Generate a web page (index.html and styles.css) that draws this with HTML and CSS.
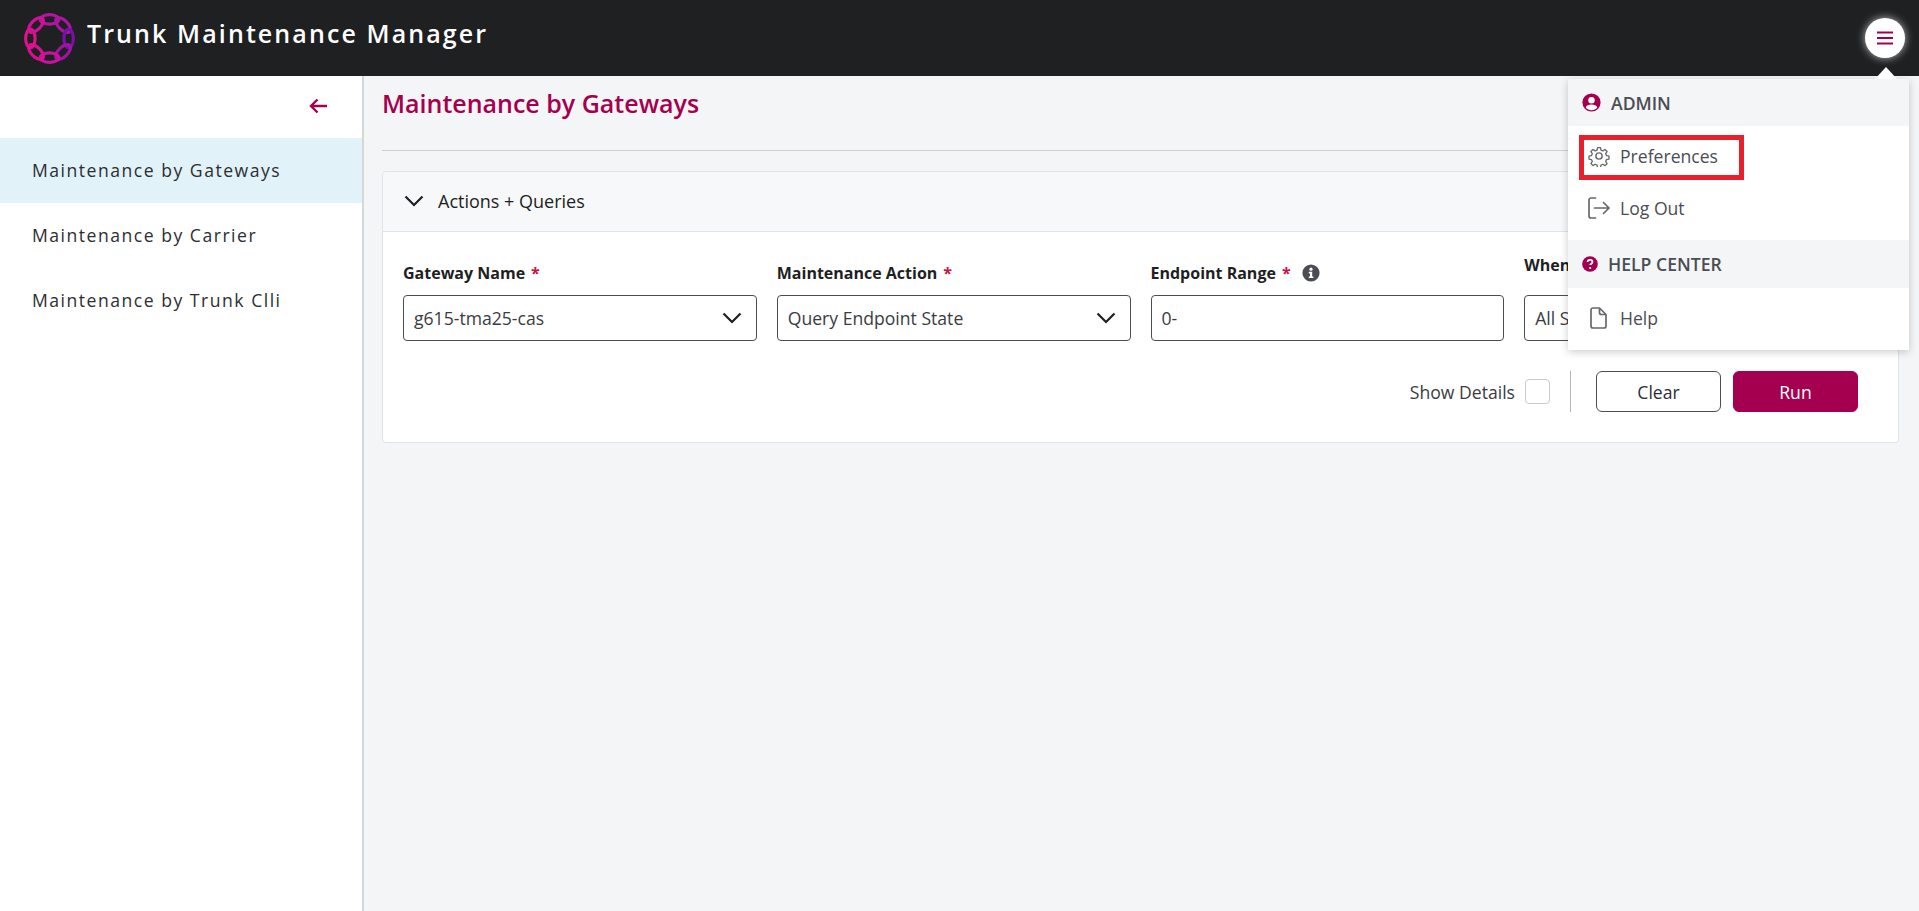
FILE: index.html
```html
<!DOCTYPE html>
<html lang="en">
<head>
    <meta charset="UTF-8">
    <meta name="viewport" content="width=device-width, initial-scale=1.0">
    <title>Trunk Maintenance Manager</title>
    <link rel="stylesheet" href="styles.css">
</head>
<body>
    <header class="topbar">
        <div class="brand">
            <svg class="brand-logo" viewBox="0 0 52 52" fill="none" stroke-width="3.2">
                <ellipse cx="26" cy="6.5" rx="9.5" ry="4.8" stroke="#b3159f"/>
                <ellipse cx="26" cy="6.5" rx="9.5" ry="4.8" stroke="#a8179f" transform="rotate(45 26 26)"/>
                <ellipse cx="26" cy="6.5" rx="9.5" ry="4.8" stroke="#7a10a8" transform="rotate(90 26 26)"/>
                <ellipse cx="26" cy="6.5" rx="9.5" ry="4.8" stroke="#a0159f" transform="rotate(135 26 26)"/>
                <ellipse cx="26" cy="6.5" rx="9.5" ry="4.8" stroke="#c9139b" transform="rotate(180 26 26)"/>
                <ellipse cx="26" cy="6.5" rx="9.5" ry="4.8" stroke="#d91093" transform="rotate(225 26 26)"/>
                <ellipse cx="26" cy="6.5" rx="9.5" ry="4.8" stroke="#e3108c" transform="rotate(270 26 26)"/>
                <ellipse cx="26" cy="6.5" rx="9.5" ry="4.8" stroke="#d01296" transform="rotate(315 26 26)"/>
            </svg>
            <span class="brand-name">Trunk Maintenance Manager</span>
        </div>
        <button class="menu-btn">
            <svg viewBox="0 0 16 14" width="16" height="14"><path d="M0 1.5h16M0 7h16M0 12.5h16" stroke="#a5004f" stroke-width="2.2"/></svg>
        </button>
    </header>

    <div class="layout">
        <nav class="sidebar">
            <div class="sidebar-top">
                <svg viewBox="0 0 18 16" width="18" height="16" fill="none" stroke="#a5004f" stroke-width="2.4"><path d="M8.5 1.5 2 8l6.5 6.5M2.5 8H18"/></svg>
            </div>
            <a class="nav-item active">Maintenance by Gateways</a>
            <a class="nav-item">Maintenance by Carrier</a>
            <a class="nav-item">Maintenance by Trunk Clli</a>
        </nav>

        <main class="content">
            <h1 class="page-title">Maintenance by Gateways</h1>

            <section class="card">
                <div class="card-head">
                    <svg viewBox="0 0 20 12" width="20" height="12" fill="none" stroke="#1e1f22" stroke-width="2.2"><path d="M1.5 1.5 10 10l8.500-8.500"/></svg>
                    <span>Actions + Queries</span>
                </div>
                <div class="card-body">
                    <div class="fields">
                        <div class="field">
                            <label>Gateway Name <em>*</em></label>
                            <div class="control">
                                <span>g615-tma25-cas</span>
                                <svg viewBox="0 0 20 12" width="20" height="12" fill="none" stroke="#1e1f22" stroke-width="2.2"><path d="M1.5 1.5 10 10l8.500-8.500"/></svg>
                            </div>
                        </div>
                        <div class="field">
                            <label>Maintenance Action <em>*</em></label>
                            <div class="control">
                                <span>Query Endpoint State</span>
                                <svg viewBox="0 0 20 12" width="20" height="12" fill="none" stroke="#1e1f22" stroke-width="2.2"><path d="M1.5 1.5 10 10l8.500-8.500"/></svg>
                            </div>
                        </div>
                        <div class="field">
                            <label>Endpoint Range <em>*</em>
                                <svg class="info-icon" viewBox="0 0 18 18" width="18" height="18"><circle cx="9" cy="9" r="8.600" fill="#4a4d52"/><circle cx="9" cy="5.200" r="1.600" fill="#fff"/><path d="M6.800 7.800h3.400v4.600h1.200v1.600H6.800v-1.600H8v-3H6.800z" fill="#fff"/></svg>
                            </label>
                            <div class="control">
                                <span>0-</span>
                            </div>
                        </div>
                        <div class="field">
                            <label class="label-raised">When</label>
                            <div class="control">
                                <span>All States</span>
                            </div>
                        </div>
                    </div>
                    <div class="actions">
                        <span class="check-label">Show Details</span>
                        <span class="checkbox"></span>
                        <span class="separator"></span>
                        <button class="btn">Clear</button>
                        <button class="btn primary">Run</button>
                    </div>
                </div>
            </section>
        </main>
    </div>

    <div class="dropdown">
        <div class="dropdown-head">
            <svg viewBox="0 0 20 20" width="19" height="19"><circle cx="10" cy="10" r="9.600" fill="#a5004f"/><circle cx="10" cy="7.600" r="3.400" fill="#fff"/><path d="M3.900 15.200c1-2.400 3-3.200 6.100-3.200s5.100.8 6.100 3.200c-1.500 1.800-3.600 2.900-6.100 2.900s-4.600-1.100-6.100-2.900z" fill="#fff"/></svg>
            <span>ADMIN</span>
        </div>
        <div class="dropdown-item item-prefs">
            <div class="highlight">
                <svg viewBox="0 0 24 24" width="22" height="22" fill="none" stroke="#66696e" stroke-width="1.6" stroke-linejoin="round"><circle cx="12" cy="12" r="3.400"/><path d="M10.200 1.800h3.600l.6 3 2.300 1 2.600-1.700 2.500 2.500-1.700 2.600 1 2.300 3 .6v3.600l-3 .6-1 2.300 1.700 2.600-2.500 2.500-2.600-1.700-2.300 1-.6 3h-3.600l-.6-3-2.300-1-2.600 1.700-2.500-2.500 1.700-2.600-1-2.300-3-.6v-3.600l3-.6 1-2.300-1.700-2.600 2.500-2.500 2.600 1.700 2.300-1z" transform="translate(1.200 1.200) scale(.9)"/></svg>
                <span>Preferences</span>
            </div>
        </div>
        <div class="dropdown-item item-logout">
            <svg viewBox="0 0 22 22" width="22" height="22" fill="none" stroke="#66696e" stroke-width="1.700" stroke-linecap="round" stroke-linejoin="round"><path d="M7.500 1H3a2 2 0 0 0-2 2v16a2 2 0 0 0 2 2h4.500M6.500 11H21M15.500 5.500 21 11l-5.500 5.500"/></svg>
            <span>Log Out</span>
        </div>
        <div class="dropdown-head help-head">
            <svg viewBox="0 0 20 20" width="16" height="16"><circle cx="10" cy="10" r="9.800" fill="#a5004f"/><path d="M7 7.600c0-1.800 1.400-2.800 3.100-2.800s3 1 3 2.600c0 2.200-2.800 2.200-2.800 4" fill="none" stroke="#fff" stroke-width="2.200"/><circle cx="10.200" cy="15" r="1.400" fill="#fff"/></svg>
            <span>HELP CENTER</span>
        </div>
        <div class="dropdown-item item-help">
            <svg viewBox="0 0 17 22" width="17" height="22" fill="none" stroke="#66696e" stroke-width="1.700" stroke-linejoin="round"><path d="M3 1h6.500L16 7.500V19a2 2 0 0 1-2 2H3a2 2 0 0 1-2-2V3a2 2 0 0 1 2-2zM9.500 1v4.500a2 2 0 0 0 2 2H16"/></svg>
            <span>Help</span>
        </div>
    </div>
</body>
</html>
```

FILE: styles.css
```css
* {
    box-sizing: border-box;
}

html, body {
    height: 100%;
}

body {
    font-family: 'Open Sans', sans-serif;
    margin: 0;
    background-color: #f4f5f7;
    color: #1e1f22;
    overflow: hidden;
}

.topbar {
    height: 76px;
    background-color: #1f2022;
    display: flex;
    align-items: center;
    justify-content: space-between;
    padding: 0 14px 0 24px;
}

.brand {
    display: flex;
    align-items: center;
    gap: 12px;
}

.brand-logo {
    width: 51px;
    height: 51px;
}

.brand-name {
    color: #fff;
    font-size: 25px;
    font-weight: 600;
    letter-spacing: 2.1px;
    padding-bottom: 10px;
}

.menu-btn {
    width: 40px;
    height: 40px;
    border: none;
    border-radius: 50%;
    background-color: #fff;
    box-shadow: 0 0 8px rgba(255, 255, 255, 0.7);
    display: flex;
    align-items: center;
    justify-content: center;
    padding: 0;
}

.layout {
    display: flex;
    height: calc(100% - 76px);
}

.sidebar {
    width: 364px;
    flex-shrink: 0;
    background-color: #fff;
    border-right: 2px solid #d6d7d9;
}

.sidebar-top {
    height: 62px;
    display: flex;
    align-items: center;
    justify-content: flex-end;
    padding: 0 35px 2px 0;
}

.nav-item {
    display: block;
    height: 65px;
    line-height: 65px;
    padding-left: 32px;
    font-size: 17.6px;
    letter-spacing: 1.5px;
    color: #2c2e33;
}

.nav-item.active {
    background-color: #e1f2f9;
}

.content {
    flex: 1;
    padding: 0 20px 0 18px;
}

.page-title {
    margin: 0 0 20px;
    height: 75px;
    line-height: 54px;
    font-size: 25px;
    font-weight: 600;
    color: #a5004f;
    border-bottom: 1px solid #cfd1d4;
}

.card {
    background-color: #fff;
    border: 1px solid #e2e3e6;
    border-radius: 4px;
}

.card-head {
    height: 60px;
    background-color: #f7f8fa;
    border-bottom: 1px solid #e2e3e6;
    border-radius: 4px 4px 0 0;
    display: flex;
    align-items: center;
    gap: 14px;
    padding: 0 0 2px 21px;
    font-size: 18px;
    font-weight: 500;
}

.card-body {
    padding: 29px 20px 30px;
}

.fields {
    display: grid;
    grid-template-columns: repeat(4, 1fr);
    gap: 20px;
}

.field label {
    display: flex;
    align-items: center;
    gap: 6px;
    height: 34px;
    padding-bottom: 10px;
    font-size: 16px;
    font-weight: 700;
}

.field label em {
    color: #d0103f;
    font-style: normal;
}

.field label .info-icon {
    margin-left: 5px;
}

.field label.label-raised {
    padding-bottom: 26px;
}

.control {
    height: 46px;
    border: 1px solid #4a4d52;
    border-radius: 4px;
    background-color: #fff;
    display: flex;
    align-items: center;
    justify-content: space-between;
    padding: 0 14px 0 10px;
    font-size: 17.6px;
    color: #3a3c41;
}

.actions {
    display: flex;
    align-items: center;
    justify-content: flex-end;
    margin-top: 30px;
    padding-right: 20px;
}

.check-label {
    font-size: 17.6px;
    color: #3a3c41;
}

.checkbox {
    width: 25px;
    height: 25px;
    margin-left: 10px;
    border: 1px solid #c9cbce;
    border-radius: 4px;
    background-color: #fff;
}

.separator {
    width: 1px;
    height: 41px;
    margin: 0 25px 0 20px;
    background-color: #b4b6b9;
}

.btn {
    width: 125px;
    height: 41px;
    font-family: inherit;
    font-size: 17.6px;
    border: 1px solid #4a4d52;
    border-radius: 6px;
    background-color: #fff;
    color: #2c2e33;
}

.btn.primary {
    margin-left: 12px;
    background-color: #a5004f;
    border-color: #a5004f;
    color: #fff;
}

.dropdown {
    position: absolute;
    top: 79px;
    left: 1568px;
    width: 341px;
    height: 271px;
    background-color: #fff;
    box-shadow: 0 2px 8px rgba(0, 0, 0, 0.2);
}

.dropdown::before {
    content: "";
    position: absolute;
    top: -12px;
    left: 307px;
    border-left: 11px solid transparent;
    border-right: 11px solid transparent;
    border-bottom: 12px solid #fff;
}

.dropdown-head {
    height: 47px;
    background-color: #f4f5f7;
    display: flex;
    align-items: center;
    gap: 10px;
    padding-left: 14px;
    font-size: 17.6px;
    font-weight: 600;
    color: #4a4d52;
}

.help-head {
    height: 48px;
}

.dropdown-item {
    display: flex;
    align-items: center;
    gap: 10px;
    padding-left: 20px;
    font-size: 17.6px;
    color: #4a4d52;
}

.item-prefs {
    height: 60px;
    padding: 9px 0 0 11px;
    align-items: flex-start;
}

.item-logout {
    height: 54px;
    padding-bottom: 10px;
}

.item-help {
    height: 62px;
    padding-left: 22px;
    padding-bottom: 2px;
    gap: 13px;
}

.highlight {
    display: flex;
    align-items: center;
    gap: 10px;
    width: 165px;
    height: 45px;
    padding: 0 0 3px 4px;
    border: 5px solid #e8202c;
}
```
